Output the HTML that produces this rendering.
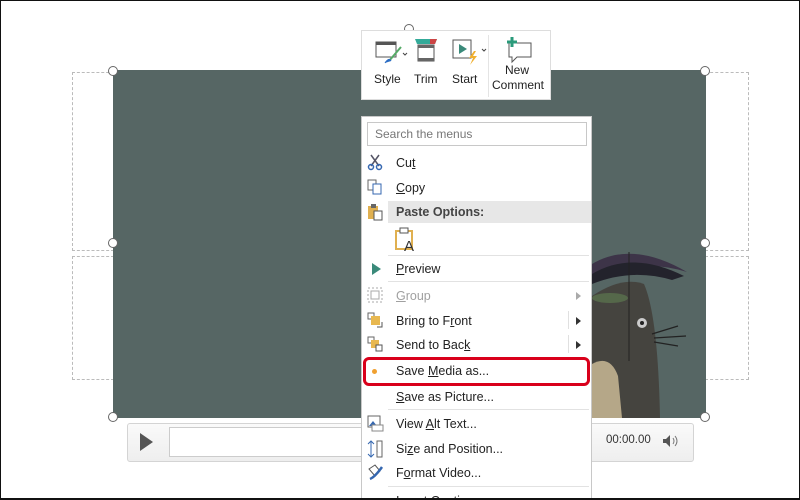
<!DOCTYPE html>
<html><head><style>
*{margin:0;padding:0;box-sizing:border-box}
html,body{width:800px;height:500px;overflow:hidden}
body{background:#fff;font-family:"Liberation Sans",sans-serif;position:relative}
.abs{position:absolute}
.frame{left:0;top:0;width:800px;height:500px;border:1px solid #111;border-bottom:2px solid #111;z-index:50;pointer-events:none}
.dash{border:1px dashed #bbb}
.h{width:10px;height:10px;border:1.5px solid #666;border-radius:50%;background:#fff;z-index:5}
.menu{left:361px;top:116px;width:231px;height:382px;overflow:hidden;background:#fff;border:1px solid #c8c8c8;border-bottom:none;z-index:10;font-size:12.5px;color:#222}
.it{position:absolute;left:34px;font-size:12.5px;line-height:14px}
.sep{position:absolute;left:26px;right:2px;height:1px;background:#e2e2e2}
.ar{position:absolute;right:10px;width:0;height:0;border-left:5px solid #333;border-top:4px solid transparent;border-bottom:4px solid transparent}
.vs{position:absolute;left:206px;width:1px;height:18px;background:#e0e0e0}
.tb{left:361px;top:30px;width:190px;height:70px;background:#fff;border:1px solid #ddd;z-index:10;font-size:12px;color:#222}
</style></head><body>
<div class="abs frame"></div>
<div class="abs dash" style="left:72px;top:72px;width:42px;height:179px"></div>
<div class="abs dash" style="left:72px;top:256px;width:42px;height:124px"></div>
<div class="abs dash" style="left:705px;top:72px;width:44px;height:179px"></div>
<div class="abs dash" style="left:705px;top:256px;width:44px;height:124px"></div>
<div class="abs" style="left:113px;top:70px;width:593px;height:348px;background:#566664"></div>
<svg class="abs" style="left:592px;top:236px" width="114" height="182">
<path d="M0 60 Q30 40 52 48 Q66 80 68 182 L0 182Z" fill="#45443f"/>
<path d="M0 28 Q40 4 95 36 Q50 22 0 40Z" fill="#3d3448"/>
<path d="M0 38 Q40 14 92 40 L80 44 Q40 32 0 48Z" fill="#23232c"/>
<ellipse cx="18" cy="62" rx="18" ry="5" fill="#55684a"/>
<path d="M0 128 Q18 118 26 140 L30 182 L0 182Z" fill="#b5a788"/>
<circle cx="50" cy="87" r="5" fill="#ccc"/><circle cx="50" cy="87" r="2" fill="#222"/>
<path d="M60 98 L86 90 M62 102 L94 100 M62 106 L86 110" stroke="#222" stroke-width="1.3"/>
<line x1="37" y1="16" x2="37" y2="125" stroke="#222"/>
</svg>
<div class="abs h" style="left:108px;top:66px"></div>
<div class="abs h" style="left:700px;top:66px"></div>
<div class="abs h" style="left:108px;top:238px"></div>
<div class="abs h" style="left:700px;top:238px"></div>
<div class="abs h" style="left:108px;top:412px"></div>
<div class="abs h" style="left:700px;top:412px"></div>
<div class="abs h" style="left:404px;top:24px"></div>
<div class="abs" style="left:127px;top:423px;width:567px;height:39px;border:1px solid #d4d4d4;border-radius:3px;background:linear-gradient(#fafafa,#eee)"></div>
<div class="abs" style="left:140px;top:433px;width:0;height:0;border-left:13px solid #555;border-top:9px solid transparent;border-bottom:9px solid transparent"></div>
<div class="abs" style="left:169px;top:427px;width:200px;height:30px;border:1px solid #ccc;background:#fff"></div>
<div class="abs" style="left:606px;top:434px;font-size:11.5px;color:#333">00:00.00</div>
<svg class="abs" style="left:662px;top:434px" width="18" height="14"><path d="M1 5h3l4-4v12l-4-4H1z" fill="#555"/><path d="M11 4q2 3 0 6M13 2q4 5 0 10" stroke="#777" fill="none"/></svg>
<div class="abs tb">
<svg class="abs" style="left:13px;top:8px" width="34" height="26"><rect x="1" y="3" width="20" height="15" fill="#fff" stroke="#555"/><rect x="1" y="3" width="20" height="3" fill="#555"/><path d="M14 22 L26 8" stroke="#5a6" stroke-width="2"/><path d="M10 24q4-6 6-2" fill="#2b6cc4" stroke="#2b6cc4"/><path d="M28 14l2 2 2-2" stroke="#444" fill="none"/></svg>
<svg class="abs" style="left:52px;top:6px" width="24" height="28"><path d="M1 2h22l-2 5H3z" fill="#3a9"/><path d="M16 2h7l-2 5h-5z" fill="#c44"/><rect x="4" y="8" width="16" height="16" fill="#fff" stroke="#555"/><rect x="4" y="8" width="16" height="3" fill="#666"/><rect x="4" y="21" width="16" height="3" fill="#666"/></svg>
<svg class="abs" style="left:90px;top:6px" width="36" height="30"><rect x="1" y="3" width="18" height="18" fill="#fff" stroke="#555"/><path d="M7 7l8 5-8 5z" fill="#3a8a7a"/><path d="M22 14l-5 7h4l-3 7 7-9h-4l3-5z" fill="#f0b030"/><path d="M30 12l2 2 2-2" stroke="#444" fill="none"/></svg>
<div class="abs" style="left:126px;top:4px;width:1px;height:62px;background:#e4e4e4"></div>
<svg class="abs" style="left:142px;top:4px" width="30" height="30"><path d="M5 8h22v14H13l-5 5v-5H5z" fill="#fff" stroke="#555"/><path d="M8 2v10M3 7h10" stroke="#2a9a7a" stroke-width="3"/></svg>
<div class="abs" style="left:12px;top:41px">Style</div>
<div class="abs" style="left:52px;top:41px">Trim</div>
<div class="abs" style="left:90px;top:41px">Start</div>
<div class="abs" style="left:130px;top:32px;width:50px;text-align:center;line-height:15px">New<br>Comment</div>
</div>
<div class="abs menu">
<div class="abs" style="left:5px;top:5px;width:220px;height:24px;border:1px solid #c8c8c8;font-size:12px;color:#777;padding:4px 7px">Search the menus</div>
<svg class="abs" style="left:5px;top:37px" width="16" height="17"><path d="M4 1l8 11M12 1l-8 11" stroke="#556" stroke-width="1.5"/><circle cx="4" cy="13" r="2.5" fill="none" stroke="#3567b0" stroke-width="1.5"/><circle cx="12" cy="13" r="2.5" fill="none" stroke="#3567b0" stroke-width="1.5"/></svg>
<div class="it" style="top:39px">Cu<u>t</u></div>
<svg class="abs" style="left:5px;top:62px" width="16" height="16"><rect x="1" y="1" width="8" height="10" fill="#fff" stroke="#666"/><rect x="6" y="5" width="8" height="10" fill="#fff" stroke="#3567b0"/></svg>
<div class="it" style="top:64px"><u>C</u>opy</div>
<div class="abs" style="left:26px;top:84px;width:203px;height:22px;background:#e7e7e7"></div>
<svg class="abs" style="left:5px;top:86px" width="16" height="18"><rect x="1" y="3" width="10" height="13" fill="#e0b050"/><rect x="4" y="1" width="5" height="4" fill="#666"/><rect x="7" y="8" width="8" height="9" fill="#fff" stroke="#555"/></svg>
<div class="it" style="top:88px;font-weight:bold;color:#444">Paste Options:</div>
<svg class="abs" style="left:32px;top:110px" width="24" height="26"><path d="M2 4h16v18H2z" fill="#fff" stroke="#e0b050" stroke-width="2"/><rect x="6" y="1" width="8" height="5" fill="#fff" stroke="#555"/><text x="10" y="24" font-size="15" font-family="Liberation Sans" fill="#333">A</text></svg>
<div class="sep" style="top:138px"></div>
<div class="abs" style="left:10px;top:146px;width:0;height:0;border-left:9px solid #3a8a7a;border-top:6px solid transparent;border-bottom:6px solid transparent"></div>
<div class="it" style="top:145px"><u>P</u>review</div>
<div class="sep" style="top:164px"></div>
<svg class="abs" style="left:5px;top:170px" width="16" height="16"><rect x="1" y="1" width="14" height="14" fill="none" stroke="#aaa" stroke-dasharray="2 2"/><rect x="4" y="4" width="8" height="8" fill="none" stroke="#aaa"/></svg>
<div class="it" style="top:172px;color:#a0a0a0"><u>G</u>roup</div>
<div class="ar" style="top:175px;border-left-color:#aaa"></div>
<svg class="abs" style="left:5px;top:195px" width="16" height="16"><rect x="1" y="1" width="6" height="6" fill="none" stroke="#666"/><rect x="4" y="4" width="9" height="9" fill="#e8b850"/><path d="M10 15h5v-5" stroke="#555" fill="none"/></svg>
<div class="it" style="top:197px">Bring to F<u>r</u>ont</div>
<div class="vs" style="top:194px"></div><div class="ar" style="top:200px"></div>
<svg class="abs" style="left:5px;top:219px" width="16" height="16"><rect x="1" y="1" width="6" height="6" fill="none" stroke="#666"/><rect x="4" y="4" width="8" height="8" fill="#e8b850"/><rect x="9" y="9" width="6" height="6" fill="#fff" stroke="#555"/></svg>
<div class="it" style="top:221px">Send to Bac<u>k</u></div>
<div class="vs" style="top:218px"></div><div class="ar" style="top:224px"></div>
<div class="abs" style="left:10px;top:252px;width:5px;height:5px;border-radius:50%;background:#f0a030"></div>
<div class="it" style="top:247px">Save <u>M</u>edia as...</div>
<div class="abs" style="left:1px;top:240px;width:227px;height:29px;border:3px solid #d9001b;border-radius:6px"></div>
<div class="it" style="top:273px"><u>S</u>ave as Picture...</div>
<div class="sep" style="top:292px"></div>
<svg class="abs" style="left:5px;top:298px" width="17" height="17"><rect x="1" y="1" width="12" height="11" fill="#fff" stroke="#666"/><path d="M2 11l4-5 4 5z" fill="#3567b0"/><rect x="5" y="10" width="11" height="6" fill="#fff" stroke="#888"/></svg>
<div class="it" style="top:300px">View <u>A</u>lt Text...</div>
<svg class="abs" style="left:5px;top:323px" width="17" height="18"><path d="M4 1v16M1 4l3-3 3 3M1 14l3 3 3-3" stroke="#3567b0" fill="none"/><rect x="10" y="1" width="5" height="16" fill="none" stroke="#666"/></svg>
<div class="it" style="top:325px">Si<u>z</u>e and Position...</div>
<svg class="abs" style="left:5px;top:347px" width="17" height="17"><path d="M2 5l6-4 5 6-5 5z" fill="#fff" stroke="#555"/><path d="M3 15q5-2 12-12" stroke="#3567b0" stroke-width="2.5"/></svg>
<div class="it" style="top:349px">F<u>o</u>rmat Video...</div>
<div class="sep" style="top:369px"></div>
<div class="it" style="top:377px">Insert Captions</div>
</div>
</body></html>
